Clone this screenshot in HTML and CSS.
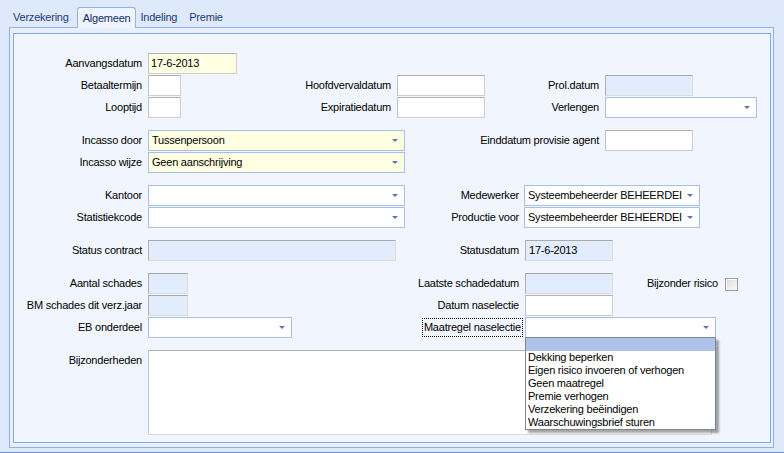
FILE: index.html
```html
<!DOCTYPE html>
<html lang="nl">
<head>
<meta charset="utf-8">
<title>Algemeen</title>
<link rel="stylesheet" href="styles.css">
</head>
<body>
<div class="window">
  <div class="tabs">
    <div class="tab">Verzekering</div>
    <div class="tab active">Algemeen</div>
    <div class="tab">Indeling</div>
    <div class="tab">Premie</div>
  </div>
  <div class="panel">
    <div class="panel-inner">
      <div class="section">
        <div class="row">
          <div class="lbl w134">Aanvangsdatum</div>
          <div class="edit yellow f89">17-6-2013</div>
        </div>
        <div class="row">
          <div class="lbl w134">Betaaltermijn</div>
          <div class="edit f33"></div>
          <div class="lbl w216">Hoofdvervaldatum</div>
          <div class="edit f88"></div>
          <div class="lbl w120">Prol.datum</div>
          <div class="edit ro f88"></div>
        </div>
        <div class="row">
          <div class="lbl w134">Looptijd</div>
          <div class="edit f33"></div>
          <div class="lbl w216">Expiratiedatum</div>
          <div class="edit f88"></div>
          <div class="lbl w120">Verlengen</div>
          <div class="combo f152"><span class="val"></span><span class="arrow"></span></div>
        </div>
      </div>

      <div class="section">
        <div class="row">
          <div class="lbl w134">Incasso door</div>
          <div class="combo yellow f257"><span class="val">Tussenpersoon</span><span class="arrow"></span></div>
          <div class="lbl w200">Einddatum provisie agent</div>
          <div class="edit f88"></div>
        </div>
        <div class="row">
          <div class="lbl w134">Incasso wijze</div>
          <div class="combo yellow f257"><span class="val">Geen aanschrijving</span><span class="arrow"></span></div>
        </div>
      </div>

      <div class="section">
        <div class="row">
          <div class="lbl w134">Kantoor</div>
          <div class="combo f257"><span class="val"></span><span class="arrow"></span></div>
          <div class="lbl w119 tight">Medewerker</div>
          <div class="combo f176"><span class="val">Systeembeheerder BEHEERDEI</span><span class="arrow"></span></div>
        </div>
        <div class="row">
          <div class="lbl w134">Statistiekcode</div>
          <div class="combo f257"><span class="val"></span><span class="arrow"></span></div>
          <div class="lbl w119 tight">Productie voor</div>
          <div class="combo f176"><span class="val">Systeembeheerder BEHEERDEI</span><span class="arrow"></span></div>
        </div>
      </div>

      <div class="section">
        <div class="row">
          <div class="lbl w134">Status contract</div>
          <div class="edit ro f248"></div>
          <div class="lbl w129">Statusdatum</div>
          <div class="edit ro f88">17-6-2013</div>
        </div>
      </div>

      <div class="section">
        <div class="row">
          <div class="lbl w134">Aantal schades</div>
          <div class="edit ro f40"></div>
          <div class="lbl w337">Laatste schadedatum</div>
          <div class="edit ro f88"></div>
          <div class="lbl w112 wide">Bijzonder risico</div>
          <div class="check"></div>
        </div>
        <div class="row">
          <div class="lbl w134">BM schades dit verz.jaar</div>
          <div class="edit ro f40"></div>
          <div class="lbl w337">Datum naselectie</div>
          <div class="edit f88"></div>
        </div>
        <div class="row">
          <div class="lbl w134">EB onderdeel</div>
          <div class="combo f144"><span class="val"></span><span class="arrow"></span></div>
          <div class="lbl w233 focuswrap"><span class="focus">Maatregel naselectie</span></div>
          <div class="combo f191"><span class="val"></span><span class="arrow"></span></div>
        </div>
      </div>

      <div class="section">
        <div class="row tall">
          <div class="lbl w134 top">Bijzonderheden</div>
          <div class="memo"></div>
        </div>
      </div>
    </div>
  </div>
  <div class="statusline"></div>

  <ul class="droplist">
    <li class="sel">&nbsp;</li>
    <li>Dekking beperken</li>
    <li>Eigen risico invoeren of verhogen</li>
    <li>Geen maatregel</li>
    <li>Premie verhogen</li>
    <li>Verzekering beëindigen</li>
    <li>Waarschuwingsbrief sturen</li>
  </ul>
</div>
</body>
</html>
```

FILE: styles.css
```css
html, body {
  margin: 0;
  padding: 0;
}
body {
  width: 784px;
  height: 453px;
  overflow: hidden;
  background: #dee9fc;
  font-family: "Liberation Sans", Arial, sans-serif;
  font-size: 11px;
  letter-spacing: -0.22px;
  color: #000;
}
.window {
  position: relative;
  width: 784px;
  height: 453px;
}

/* tabs */
.tabs {
  display: flex;
  align-items: flex-end;
  height: 27px;
  padding-left: 7px;
  box-sizing: border-box;
}
.tab {
  height: 19px;
  line-height: 19px;
  padding: 0 6px;
  color: #1b3a7a;
  white-space: nowrap;
}
.tab.active {
  position: relative;
  z-index: 1;
  height: 20px;
  line-height: 20px;
  margin: 0 -2px -1px 2px;
  padding: 0 5px;
  border: 1px solid #8fb3e6;
  border-bottom: none;
  border-radius: 3px 3px 0 0;
  background: #eff5fe;
  color: #0f2a66;
}

/* panel */
.panel {
  margin: 0 10px 0 9px;
  height: 421px;
  box-sizing: border-box;
  border: 1px solid #8db2e8;
  padding: 5px 2px 4px 3px;
  background: #e8f0fd;
}
.panel-inner {
  height: 100%;
  box-sizing: border-box;
  border: 1px solid #82a9e2;
  background: #f1f6fe;
  padding-top: 19px;
}
.statusline {
  margin-top: 4px;
  height: 1px;
  border-top: 1px solid #6b91d0;
  background: #b4c9ec;
}

/* form */
.section {
  display: flex;
  flex-direction: column;
  gap: 1px;
  margin-bottom: 12px;
}
.row {
  display: flex;
  align-items: center;
  height: 21px;
}
.row.tall {
  align-items: flex-start;
  height: 85px;
}
.lbl {
  flex: none;
  box-sizing: border-box;
  text-align: right;
  padding-right: 6px;
  white-space: nowrap;
  line-height: 21px;
}
.lbl.tight { padding-right: 5px; }
.lbl.wide { padding-right: 7px; }
.lbl.top { line-height: 21px; }
.w112 { width: 112px; }
.w119 { width: 119px; }
.w120 { width: 120px; }
.w129 { width: 129px; }
.w134 { width: 134px; }
.w200 { width: 200px; }
.w216 { width: 216px; }
.w233 { width: 233px; }
.w337 { width: 337px; }

.focuswrap { padding-right: 3px; }
.focus {
  display: inline-block;
  line-height: 17px;
  padding: 0 1px 0 1px;
  outline: 1px dotted #000;
  outline-offset: 0;
}

.edit, .combo {
  flex: none;
  box-sizing: border-box;
  height: 21px;
  line-height: 19px;
  white-space: nowrap;
  overflow: hidden;
  background: #fff;
}
.edit {
  border: 1px solid #cdcdcd;
  border-top-color: #b3b3b3;
  border-left-color: #c2c2c2;
  padding-left: 2px;
}
.edit.ro {
  background: #e1ecfd;
  border-color: #a9a9a9 #dcdcdc #dcdcdc #b0b0b0;
  padding-left: 3px;
}
.combo {
  display: flex;
  align-items: center;
  border: 1px solid #a6c0e7;
  padding: 0 6px 0 3px;
}
.yellow { background: #ffffe1; }
.combo .val {
  flex: 1;
  min-width: 0;
  overflow: hidden;
  white-space: nowrap;
}
.arrow {
  flex: none;
  width: 0;
  height: 0;
  margin-left: 3px;
  border-left: 3px solid transparent;
  border-right: 3px solid transparent;
  border-top: 3px solid #5477b6;
}

.f33 { width: 33px; }
.f40 { width: 40px; }
.f88 { width: 88px; }
.f89 { width: 89px; }
.f144 { width: 144px; }
.f152 { width: 152px; }
.f176 { width: 176px; }
.f191 { width: 191px; }
.f248 { width: 248px; }
.f257 { width: 257px; }

.check {
  flex: none;
  width: 13px;
  height: 13px;
  box-sizing: border-box;
  border: 1px solid #9c9c9c;
  background: linear-gradient(135deg, #d8d8d8 0%, #eeeeee 60%, #f8f8f8 100%);
  box-shadow: inset 1px 1px 0 #fff;
  margin-top: 1px;
}

.memo {
  flex: none;
  width: 564px;
  height: 85px;
  box-sizing: border-box;
  background: #fff;
  border: 1px solid #dadada;
  border-top-color: #b0b0b0;
  border-left-color: #c4c4c4;
}

/* dropdown overlay */
.droplist {
  position: absolute;
  left: 525px;
  top: 337px;
  width: 191px;
  margin: 0;
  padding: 0;
  list-style: none;
  box-sizing: border-box;
  background: #fff;
  border: 1px solid #7f8591;
  box-shadow: 3px 3px 2px rgba(0, 0, 0, 0.35);
  z-index: 5;
}
.droplist li {
  height: 13px;
  line-height: 13px;
  padding-left: 2px;
  white-space: nowrap;
  overflow: hidden;
}
.droplist li.sel {
  background: #afc3ea;
}
```
